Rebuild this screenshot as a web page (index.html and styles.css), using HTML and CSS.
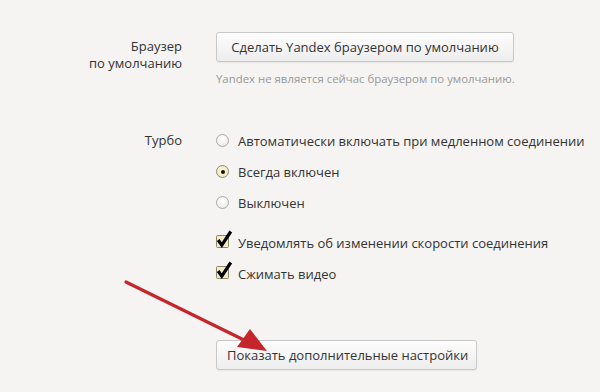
FILE: index.html
```html
<!DOCTYPE html>
<html lang="ru">
<head>
<meta charset="utf-8">
<link rel="stylesheet" href="styles.css">
</head>
<body>
<main class="settings">
  <section class="row default-browser">
    <div class="label label-two"><div>Браузер</div><div>по умолчанию</div></div>
    <div class="content">
      <button class="btn btn-default">Сделать Yandex браузером по умолчанию</button>
      <p class="hint">Yandex не является сейчас браузером по умолчанию.</p>
    </div>
  </section>

  <section class="row turbo">
    <div class="label">Турбо</div>
    <div class="content">
      <div class="opt"><span class="radio"></span>Автоматически включать при медленном соединении</div>
      <div class="opt"><span class="radio checked"></span>Всегда включен</div>
      <div class="opt"><span class="radio"></span>Выключен</div>
      <div class="opt opt-check first-check">
        <svg class="check" width="17" height="19" viewBox="0 0 17 19"><rect x="0.5" y="5.5" width="12" height="12" rx="1" fill="#f3ebc6" stroke="#8b8667"/><path d="M2.2 10 L5.8 15.2 L14.8 1.5" fill="none" stroke="#000" stroke-width="3.2" stroke-linejoin="miter"/></svg>
        Уведомлять об изменении скорости соединения
      </div>
      <div class="opt opt-check">
        <svg class="check" width="17" height="19" viewBox="0 0 17 19"><rect x="0.5" y="5.5" width="12" height="12" rx="1" fill="#f3ebc6" stroke="#8b8667"/><path d="M2.2 10 L5.8 15.2 L14.8 1.5" fill="none" stroke="#000" stroke-width="3.2" stroke-linejoin="miter"/></svg>
        Сжимать видео
      </div>
    </div>
  </section>

  <section class="row more">
    <div class="label"></div>
    <div class="content">
      <button class="btn btn-more">Показать дополнительные настройки</button>
    </div>
  </section>

  <svg class="arrow" width="600" height="392" viewBox="0 0 600 392">
    <line x1="126" y1="282" x2="246" y2="341" stroke="#c4262b" stroke-width="3.2" stroke-linecap="round"/>
    <polygon points="267,351 237,347 250,329" fill="#c4262b"/>
  </svg>
</main>
</body>
</html>
```

FILE: styles.css
```css
html, body {
  margin: 0;
  padding: 0;
  background: #f5f4f2;
}

.settings {
  position: relative;
  width: 600px;
  height: 392px;
  overflow: hidden;
  font-family: "Open Sans", "Noto Sans", sans-serif;
  font-size: 13px;
  color: #333;
  padding-top: 32px;
  box-sizing: border-box;
}

.row {
  display: grid;
  grid-template-columns: 182px 1fr;
  column-gap: 34px;
}

.label {
  text-align: right;
  color: #333;
  line-height: 31px;
}

.label-two {
  line-height: 17px;
  padding-top: 6px;
}

.content {
  display: flex;
  flex-direction: column;
  align-items: flex-start;
}

.btn {
  font-family: inherit;
  font-size: 13px;
  color: #333;
  height: 30px;
  padding: 0 10px;
  border: 1px solid #c8c8c8;
  border-radius: 3px;
  background: linear-gradient(#fdfdfd, #ededed);
  box-shadow: 0 1px 1px rgba(0,0,0,0.06);
  white-space: nowrap;
  cursor: pointer;
}

.btn-default {
  width: 298px;
}

.btn-more {
  width: 261px;
}

.hint {
  margin: 9px 0 0;
  font-size: 11.4px;
  line-height: 16px;
  color: #999;
  white-space: nowrap;
}

.turbo {
  margin-top: 38px;
}

.opt {
  display: flex;
  align-items: center;
  height: 31px;
  color: #333;
  white-space: nowrap;
}

.radio {
  width: 11px;
  height: 11px;
  border: 1px solid #a9a9a9;
  border-radius: 50%;
  background: radial-gradient(circle at 50% 35%, #ffffff, #e6e6e6);
  margin-right: 9px;
  position: relative;
}

.radio.checked {
  border-color: #8e8a74;
  background: radial-gradient(circle at 50% 40%, #fbf6de, #efe4b4);
}

.radio.checked::after {
  content: "";
  position: absolute;
  left: 3.5px;
  top: 3.5px;
  width: 4px;
  height: 4px;
  border-radius: 50%;
  background: #111;
}

.first-check {
  margin-top: 9px;
}

.check {
  margin-right: 5px;
  margin-top: -7px;
}

.more {
  margin-top: 51px;
}

.arrow {
  position: absolute;
  left: 0;
  top: 0;
  pointer-events: none;
}
```
